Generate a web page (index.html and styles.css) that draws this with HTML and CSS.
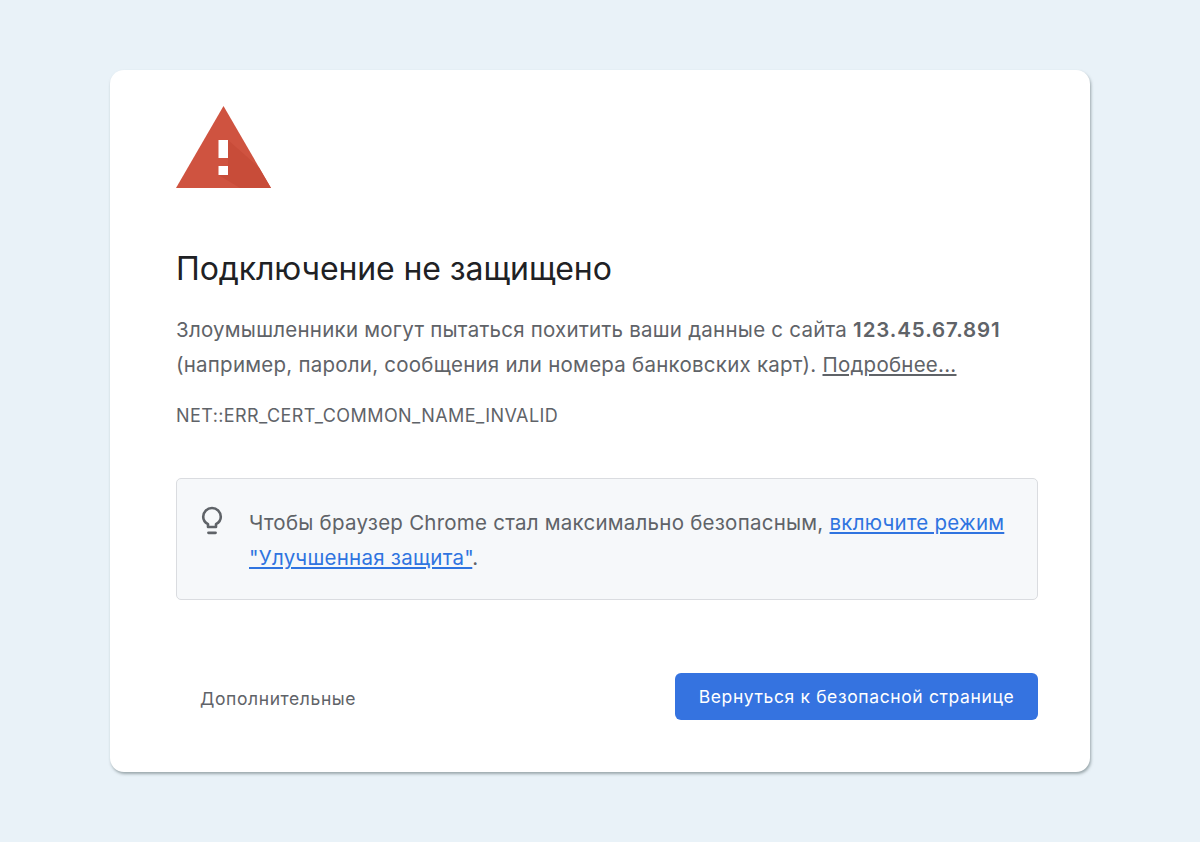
FILE: index.html
```html
<!DOCTYPE html>
<html lang="ru">
  <head>
    <meta charset="UTF-8">
    <meta name="viewport" content="width=device-width, initial-scale=1.0">
    <title>Подключение не защищено</title>
    <link rel="stylesheet" href="styles.css">
  </head>
  <body>
    <main class="card">
      <svg class="warn-icon" viewBox="0 0 95 82" width="95" height="82" aria-hidden="true">
        <polygon points="47.5,0 95,82 0,82" fill="#cf5340"/>
        <polygon points="52,34 83,61.500 95,82 64,82 42.500,69 52,60" fill="#c84c39"/>
        <rect x="42.500" y="34" width="9.500" height="18" fill="#fff"/>
        <rect x="42.500" y="60" width="9.500" height="9" fill="#fff"/>
      </svg>
      <h1>Подключение не защищено</h1>
      <p class="desc">Злоумышленники могут пытаться похитить ваши данные с сайта <b>123.45.67.891</b> (например, пароли, сообщения или номера банковских карт). <a class="more" href="#">Подробнее...</a></p>
      <p class="code">NET::ERR_CERT_COMMON_NAME_INVALID</p>
      <div class="tip">
        <svg class="bulb" viewBox="0 0 22 29" width="22" height="29" aria-hidden="true">
          <path d="M7 21v-2.800C4 16.600 2.200 13.900 2.200 10.800 2.200 5.900 6.100 2 11 2s8.800 3.900 8.800 8.800c0 3.100-1.800 5.800-4.800 7.400V21z" fill="none" stroke="#5f6368" stroke-width="2.600" stroke-linejoin="round"/>
          <path d="M7.500 26.800h7" fill="none" stroke="#5f6368" stroke-width="2.800" stroke-linecap="round"/>
        </svg>
        <p>Чтобы браузер Chrome стал максимально безопасным, <a href="#">включите режим</a> <a href="#">"Улучшенная защита"</a>.</p>
      </div>
      <div class="actions">
        <button type="button" class="btn-more">Дополнительные</button>
        <button type="button" class="btn-back">Вернуться к безопасной странице</button>
      </div>
    </main>
  </body>
</html>
```

FILE: styles.css
```css
html, body { height: 100%; }
body { margin: 0; background: #e9f2f8; font-family: Inter, "Noto Sans", sans-serif; color: #5f6368; padding: 70px 110px 0; box-sizing: border-box; overflow: hidden; }
.card { width: 980px; height: 702px; box-sizing: border-box; background: #fff; border-radius: 14px; box-shadow: 1px 2px 3px rgba(90,105,110,0.55); padding: 36px 52px 52px 66px; display: flex; flex-direction: column; }
.warn-icon { display: block; flex: none; }
h1 { margin: 61px 0 0; font-size: 32px; line-height: 40px; font-weight: 400; color: #202124; letter-spacing: -0.1px; }
.desc { margin: 23px 0 0; font-size: 20.500px; line-height: 35px; letter-spacing: 0.24px; }
.desc b { font-weight: 600; letter-spacing: 0.9px; }
.more { color: #5f6368; }
.code { margin: 22px 0 0; font-size: 18px; line-height: 24px; letter-spacing: 0.42px; }
.tip { margin-top: 50px; height: 122px; box-sizing: border-box; background: #f6f8fa; border: 1px solid #dadce0; border-radius: 5px; display: flex; padding: 26px 30px 0 24px; gap: 26px; }
.tip p { margin: 0; font-size: 20.500px; line-height: 35px; letter-spacing: 0.24px; }
.tip a { color: #2f74e0; }
.bulb { flex: none; margin-top: 1px; }
.actions { margin-top: auto; display: flex; justify-content: space-between; align-items: center; }
.btn-more { background: none; border: none; padding: 0 0 0 24px; font: inherit; font-size: 17.500px; letter-spacing: 0.6px; color: #5f6368; margin-top: 3px; }
.btn-back { width: 363px; height: 47px; background: #3573e0; border: none; border-radius: 6px; color: #fff; font: inherit; font-size: 17.500px; letter-spacing: 0.62px; }
```
